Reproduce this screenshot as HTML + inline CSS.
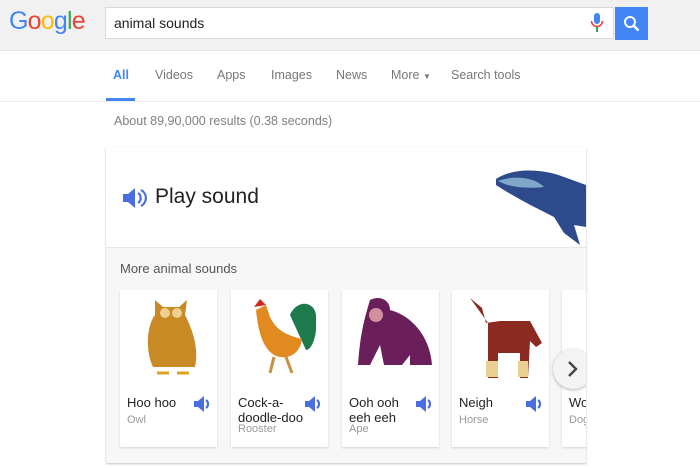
<!DOCTYPE html>
<html><head><style>
body{margin:0;width:700px;height:468px;overflow:hidden;background:#fff;font-family:"Liberation Sans",Arial,sans-serif;position:relative}
.a{position:absolute}
.hdr{left:0;top:0;width:700px;height:50px;background:#f1f1f1;border-bottom:1px solid #e5e5e5}
.box{left:105px;top:7px;width:509px;height:32px;background:#fff;border:1px solid #d9d9d9;font-size:14px;color:#222;line-height:30px;padding-left:8px;box-sizing:border-box}
.btn{left:615px;top:7px;width:33px;height:33px;background:#4285f4}
.nav{top:68px;font-size:12.5px;color:#777}
.card{left:106px;top:147px;width:480px;height:316px;background:#f7f7f7;box-shadow:0 1px 2px rgba(0,0,0,.25);overflow:hidden}
.top{left:0;top:0;width:480px;height:100px;background:#fff;border-bottom:1px solid #e6e6e6}
.c{top:143px;width:97px;height:157px;background:#fff;box-shadow:0 1px 2px rgba(0,0,0,.15)}
.t{left:7px;top:105px;font-size:13px;color:#222;line-height:15px}
.s{left:7px;font-size:11px;color:#999}
.sp{left:73px;top:105px}
</style></head><body>
<div class="a hdr"></div>
<div class="a" style="left:9px;top:7px;font-size:25px;letter-spacing:-0.8px"><span style="color:#4285f4">G</span><span style="color:#ea4335">o</span><span style="color:#fbbc05">o</span><span style="color:#4285f4">g</span><span style="color:#34a853">l</span><span style="color:#ea4335">e</span></div>
<div class="a box">animal sounds</div>
<svg class="a" style="left:590px;top:13px" width="14" height="20"><rect x="4" y="0" width="6" height="11" rx="3" fill="#4285f4"/><path d="M1.5 8a5.5 5.5 0 0 0 11 0" stroke="#ea4335" stroke-width="1.6" fill="none"/><rect x="6" y="14" width="2" height="5" fill="#34a853"/></svg>
<div class="a btn"><svg width="33" height="33"><circle cx="15" cy="15" r="5" stroke="#fff" stroke-width="2" fill="none"/><path d="M18.5 18.5l5 5" stroke="#fff" stroke-width="2.4"/></svg></div>
<div class="a nav" style="left:113px;color:#4285f4;font-weight:bold">All</div>
<div class="a nav" style="left:155px">Videos</div>
<div class="a nav" style="left:217px">Apps</div>
<div class="a nav" style="left:271px">Images</div>
<div class="a nav" style="left:336px">News</div>
<div class="a nav" style="left:391px">More <span style="font-size:8px">▼</span></div>
<div class="a nav" style="left:451px">Search tools</div>
<div class="a" style="left:106px;top:98px;width:29px;height:3px;background:#4285f4"></div>
<div class="a" style="left:0;top:101px;width:700px;height:1px;background:#ebebeb"></div>
<div class="a" style="left:114px;top:114px;font-size:12.5px;color:#808080">About 89,90,000 results (0.38 seconds)</div>
<div class="a card">
 <div class="a top"></div>
 <svg class="a" style="left:16px;top:40px" width="26" height="22"><path d="M1 7h5l7-6v20l-7-6H1z" fill="#4a6ee0"/><path d="M16 6a6 6 0 0 1 0 10M19 3a9 9 0 0 1 0 16" stroke="#4a6ee0" stroke-width="2.2" fill="none"/></svg>
 <div class="a" style="left:49px;top:38px;font-size:21px;color:#222">Play sound</div>
 <svg class="a" style="left:388px;top:20px" width="92" height="80"><path d="M2 12C20 0 50 2 70 10L92 18V60L80 58 86 78 70 66 60 50C40 40 20 30 2 18Z" fill="#2d4a8c"/><path d="M4 14C20 8 40 10 50 20 30 22 15 20 4 14Z" fill="#7fa8c8"/></svg>
 <div class="a" style="left:14px;top:114px;font-size:13px;color:#555">More animal sounds</div>
 <div class="a c" style="left:14px"><svg class="a" style="left:15px;top:5px" width="70" height="85"><path d="M20 5L28 12H44L52 5 50 20C58 35 64 55 60 72H18C10 55 12 30 20 20Z" fill="#c98a26"/><circle cx="30" cy="18" r="5" fill="#f0d090"/><circle cx="42" cy="18" r="5" fill="#f0d090"/><path d="M22 78h12M42 78h12" stroke="#e0a020" stroke-width="3"/></svg><div class="a t">Hoo hoo</div><div class="a s" style="top:124px">Owl</div><svg class="a sp" width="20" height="18"><path d="M1 6h4l6-5v16l-6-5H1z" fill="#4a6ee0"/><path d="M13 5a5 5 0 0 1 0 8" stroke="#4a6ee0" stroke-width="2.2" fill="none"/></svg></div>
 <div class="a c" style="left:125px"><svg class="a" style="left:15px;top:5px" width="70" height="85"><path d="M44 20C50 5 68 5 70 20 72 40 66 55 60 55Z" fill="#1e7a4a"/><path d="M10 15L20 10 24 22C30 35 40 40 56 44 54 60 40 66 28 60 16 52 12 35 10 15Z" fill="#e08a20"/><path d="M8 12l6-8 6 6z" fill="#d02a20"/><path d="M28 62l-4 16M40 62l6 16" stroke="#c89040" stroke-width="3"/></svg><div class="a t">Cock-a-<br>doodle-doo</div><div class="a s" style="top:133px">Rooster</div><svg class="a sp" width="20" height="18"><path d="M1 6h4l6-5v16l-6-5H1z" fill="#4a6ee0"/><path d="M13 5a5 5 0 0 1 0 8" stroke="#4a6ee0" stroke-width="2.2" fill="none"/></svg></div>
 <div class="a c" style="left:236px"><svg class="a" style="left:8px;top:5px" width="85" height="85"><path d="M20 5C30 0 40 5 40 15 60 20 80 40 82 70H60V60L52 70H34L30 50 20 70H8C10 40 14 25 20 5Z" fill="#6a1e5a"/><circle cx="26" cy="20" r="7" fill="#d090a0"/></svg><div class="a t">Ooh ooh<br>eeh eeh</div><div class="a s" style="top:133px">Ape</div><svg class="a sp" width="20" height="18"><path d="M1 6h4l6-5v16l-6-5H1z" fill="#4a6ee0"/><path d="M13 5a5 5 0 0 1 0 8" stroke="#4a6ee0" stroke-width="2.2" fill="none"/></svg></div>
 <div class="a c" style="left:346px"><svg class="a" style="left:8px;top:3px" width="85" height="90"><path d="M10 5L22 15 26 30 40 28H70L82 50 76 54 70 48 68 85H60V60H38V85H28V55 20 40 8 30Z" fill="#8a2a20"/><rect x="26" y="68" width="12" height="16" fill="#e8d090"/><rect x="58" y="68" width="10" height="16" fill="#e8d090"/></svg><div class="a t">Neigh</div><div class="a s" style="top:124px">Horse</div><svg class="a sp" width="20" height="18"><path d="M1 6h4l6-5v16l-6-5H1z" fill="#4a6ee0"/><path d="M13 5a5 5 0 0 1 0 8" stroke="#4a6ee0" stroke-width="2.2" fill="none"/></svg></div>
 <div class="a c" style="left:456px"><div class="a t">Wo</div><div class="a s" style="top:124px">Dog</div></div>
 <div class="a" style="left:447px;top:202px;width:40px;height:40px;border-radius:50%;background:#f3f3f3;box-shadow:0 1px 3px rgba(0,0,0,.3)"><svg width="40" height="40"><path d="M16 13l7 7-7 7" stroke="#444" stroke-width="2.4" fill="none"/></svg></div>
</div>
</body></html>
